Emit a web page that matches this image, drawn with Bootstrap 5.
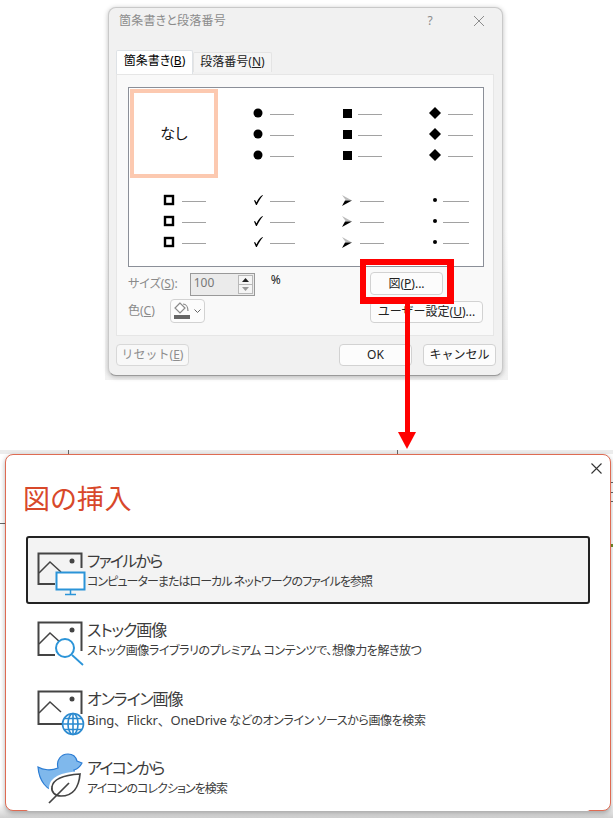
<!DOCTYPE html>
<html lang="ja">

<head>
    <meta charset="UTF-8">
    <meta name="viewport" content="width=device-width, initial-scale=1.0">
    <title>図の挿入</title>
    <link href="https://cdn.jsdelivr.net/npm/bootstrap@5.3.0/dist/css/bootstrap.min.css" rel="stylesheet">
    <style>
        body {
            background-color: #fff;
            font-family: "Noto Sans", "Noto Sans CJK JP", sans-serif;
            font-feature-settings: "palt";
            font-size: 12px;
            color: #222;
            overflow: hidden;
        }

        .page-wrap {
            width: 613px;
            height: 818px;
            position: relative;
        }

        /* upper screenshot */
        .shot-top {
            width: 403px;
            height: 380px;
            margin-left: 105px;
            padding: 7px 5px 4px 3px;
            background: linear-gradient(#fff 60%, #f2f2f2);
            position: relative;
        }

        .dlg {
            width: 395px;
            height: 369px;
            background-color: #f1f1f1;
            border: 1px solid #c9c9c9;
            border-bottom-color: #9a9a9a;
            border-radius: 8px;
            box-shadow: 0 1px 5px rgba(0, 0, 0, .25);
        }

        .dlg-title {
            height: 27px;
            padding: 0 17px 2px 10px;
            color: #8c8c8c;
            letter-spacing: .2px;
        }

        .title-btns {
            gap: 40px;
        }

        .dlg .nav-tabs {
            margin: 15px 8px 0 7px;
            border: 0;
            height: 24px;
            align-items: flex-start;
        }

        .dlg .nav-link {
            height: 24px;
            width: 77px;
            padding: 1px 0 0;
            text-align: center;
            font-size: 12px;
            color: #222;
            background-color: #fafafa;
            border: 1px solid #e4e4e4;
            border-bottom: 0;
            border-radius: 2px 2px 0 0;
        }

        .dlg .nav-item+.nav-item .nav-link {
            width: 79px;
            height: 20px;
            margin-top: 2px;
            padding-top: 0;
            background-color: #f4f4f4;
        }

        .tab-pane-box {
            height: 262px;
            margin: 0 8px 0 7px;
            padding: 12px 9px 0 11px;
            background-color: #f9f9f9;
            border: 1px solid #e6e6e6;
            position: relative;
        }

        .bullet-box {
            width: 356px;
            height: 180px;
            background-color: #fff;
            border: 1px solid #8b8f98;
            display: grid;
            grid-template-columns: 89px 89px 88px 88px;
            grid-template-rows: 90px 89px;
        }

        .bullet-none {
            border: 4px solid #fcc9b0;
            margin: 1px 0 0 1px;
            font-size: 15px;
            color: #111;
        }

        .bullet-cell {
            padding-top: 4px;
        }

        .bullet-cell.lower-cell {
            padding-top: 0;
            padding-bottom: 1px;
        }

        .bullet-line {
            height: 21px;
            padding-left: 34px;
        }

        .bullet-mark {
            width: 12px;
            height: 12px;
            margin-top: -3px;
        }

        .dash {
            height: 1px;
            width: 24px;
            margin-left: 6px;
            background-color: #a2a2a2;
        }

        .pane-label {
            color: #8a8a8a;
        }

        .opts-row {
            margin-top: 4px;
        }

        .size-row {
            height: 26px;
        }

        .colour-row {
            height: 26px;
            margin-top: 1px;
        }

        .spin-box {
            width: 65px;
            height: 23px;
            margin-left: 12px;
            padding-left: 3px;
            background-color: #ebebeb;
            border: 1px solid #999;
            color: #777;
            font-size: 12px;
        }

        .spin-btns {
            width: 15px;
            height: 19px;
            margin: 1px 1px 0 0;
            border: 1px solid #b8b8b8;
            background-color: #f5f5f5;
        }

        .spin-btns span {
            flex: 1;
            border-bottom: 1px solid #b8b8b8;
        }

        .dlg-btn {
            height: 22px;
            padding: 0;
            font-size: 12px;
            line-height: 20px;
            color: #222;
            background-color: #fcfcfc;
            border: 1px solid #d2d2d2;
            border-radius: 4px;
        }

        .dlg-btn:disabled {
            color: #8e8e8e;
            background-color: #f8f8f8;
            border-color: #d8d8d8;
            opacity: 1;
        }

        .btn-73 {
            width: 73px;
        }

        .btn-picture {
            height: 23px;
            margin-top: 1px;
        }

        .btn-user {
            width: 113px;
            margin-top: 6px;
        }

        .btn-colour {
            width: 35px;
            height: 24px;
            margin-left: 15px;
        }

        .left-opts {
            width: 242px;
        }

        .right-opts {
            width: 113px;
        }

        .dlg-foot {
            padding: 8px 6px 0 7px;
        }

        .foot-right {
            gap: 11px;
        }

        .red-box {
            position: absolute;
            left: 255px;
            top: 259px;
            width: 94px;
            height: 45px;
            border: 7px solid #f00;
            border-top-width: 6px;
            border-left-width: 6px;
            pointer-events: none;
        }

        .red-arrow {
            position: absolute;
            left: 396px;
            top: 304px;
        }

        /* lower screenshot */
        .shot-bottom {
            margin-top: 70px;
            height: 368px;
            padding: 4px 2px 0 5px;
            background: linear-gradient(#ececec 4px, #fff 4px, #fff 96%, #cfcfcf);
            position: relative;
        }

        .stray {
            position: absolute;
            background-color: #666;
        }

        .stray-green {
            background-color: #6e8f2c;
        }

        .insert-dlg {
            width: 606px;
            height: 357px;
            padding: 0 20px 0 20px;
            background-color: #fff;
            border: 1px solid #de6b53;
            border-radius: 8px;
            box-shadow: 0 2px 5px rgba(0, 0, 0, .3);
            position: relative;
        }

        .insert-close {
            position: absolute;
            top: 8px;
            right: 8px;
        }

        .insert-title {
            height: 81px;
            margin: 0 0 0 -3px;
            padding-top: 26px;
            font-size: 27px;
            line-height: 36px;
            font-weight: 400;
            color: #d8482a;
            letter-spacing: .5px;
        }

        .insert-list {
            gap: 1px;
            border-radius: 0;
        }

        .insert-item {
            height: 68px;
            padding: 8px 0 0 9px;
            background-color: #fff;
            border: 2px solid transparent !important;
            border-radius: 3px !important;
            margin: 0;
        }

        .insert-item.active-item {
            background-color: #f3f3f3;
            border-color: #222 !important;
        }

        .insert-item svg {
            flex: none;
            overflow: visible;
        }

        .item-head {
            display: block;
            margin-top: 4px;
            font-size: 16px;
            line-height: 23px;
            color: #3c3c3c;
            letter-spacing: -1.7px;
        }

        .item-sub {
            display: block;
            font-size: 12px;
            line-height: 18px;
            color: #3c3c3c;
            letter-spacing: -.95px;
        }

        .item-head.has-kanji {
            letter-spacing: -1.1px;
        }

        .item-sub.has-kanji {
            letter-spacing: -.4px;
        }

        .item-latin {
            font-size: 13px;
            letter-spacing: -.2px;
            font-feature-settings: normal;
        }
    </style>
</head>

<body>
    <div class="page-wrap">
        <div class="shot-top">
            <div class="dlg">
                <div class="dlg-title d-flex justify-content-between align-items-center">
                    <span>箇条書きと段落番号</span>
                    <span class="title-btns d-flex align-items-center">
                        <span>?</span>
                        <svg width="12" height="12" viewBox="0 0 12 12"><path d="M1 1l10 10M11 1L1 11" stroke="#8c8c8c" fill="none"/></svg>
                    </span>
                </div>
                <ul class="nav nav-tabs">
                    <li class="nav-item"><a class="nav-link active" href="#">箇条書き(<u>B</u>)</a></li>
                    <li class="nav-item"><a class="nav-link" href="#">段落番号(<u>N</u>)</a></li>
                </ul>
                <div class="tab-pane-box">
                    <div class="bullet-box" id="bullets">
                        <div class="bullet-none d-flex align-items-center justify-content-center">なし</div>
                    </div>
                    <div class="opts-row d-flex">
                        <div class="left-opts">
                            <div class="size-row d-flex align-items-center">
                                <span class="pane-label">サイズ(<u>S</u>):</span>
                                <div class="spin-box d-flex justify-content-between align-items-start">
                                    <span>100</span>
                                    <span class="spin-btns d-flex flex-column">
                                        <span class="d-flex align-items-center justify-content-center"><svg width="7" height="4"><path d="M0 4L3.5 0 7 4z" fill="#222"/></svg></span>
                                        <span class="d-flex align-items-center justify-content-center border-0"><svg width="7" height="4"><path d="M0 0L3.5 4 7 0z" fill="#999"/></svg></span>
                                    </span>
                                </div>
                                <span class="ms-3 mb-2">%</span>
                            </div>
                            <div class="colour-row d-flex align-items-center">
                                <span class="pane-label">色(<u>C</u>)</span>
                                <button class="btn dlg-btn btn-colour d-flex align-items-center justify-content-center gap-1" type="button">
                                    <svg width="17" height="18" viewBox="0 0 17 18"><path d="M7 1L2 6l5 5 5-5z" fill="#fff" stroke="#8a8a8a" stroke-width="1.2"/><path d="M10 2c3 0 5 3 5 7" fill="none" stroke="#8a8a8a" stroke-width="1.2"/><rect x="1" y="13" width="16" height="4" fill="#666"/></svg>
                                    <svg width="7" height="4" viewBox="0 0 7 4"><path d="M.5.5l3 3 3-3" fill="none" stroke="#666"/></svg>
                                </button>
                            </div>
                        </div>
                        <div class="right-opts d-flex flex-column">
                            <button class="btn dlg-btn btn-73 btn-picture" type="button">図(<u>P</u>)...</button>
                            <button class="btn dlg-btn btn-user" type="button">ユーザー設定(<u>U</u>)...</button>
                        </div>
                    </div>
                </div>
                <div class="dlg-foot d-flex justify-content-between">
                    <button class="btn dlg-btn btn-73" type="button" disabled>リセット(<u>E</u>)</button>
                    <div class="foot-right d-flex">
                        <button class="btn dlg-btn btn-73" type="button">OK</button>
                        <button class="btn dlg-btn btn-73" type="button">キャンセル</button>
                    </div>
                </div>
            </div>
            <div class="red-box"></div>
        </div>

        <svg class="red-arrow" width="22" height="146" viewBox="0 0 22 146">
            <rect x="9" y="0" width="5" height="130" fill="#f00"/>
            <path d="M2 128H20L11 145z" fill="#f00"/>
        </svg>

        <div class="shot-bottom">
            <span class="stray" style="left:68px;top:0;width:1px;height:4px"></span>
            <span class="stray" style="left:397px;top:0;width:1px;height:4px"></span>
            <span class="stray" style="left:0;top:73px;width:5px;height:1px"></span>
            <span class="stray" style="left:611px;top:32px;width:2px;height:1px"></span>
            <span class="stray" style="left:611px;top:42px;width:2px;height:1px"></span>
            <span class="stray" style="left:611px;top:51px;width:2px;height:1px"></span>
            <span class="stray stray-green" style="left:611px;top:94px;width:2px;height:3px"></span>

            <div class="insert-dlg">
                <svg class="insert-close" width="11" height="11" viewBox="0 0 11 11"><path d="M.5.5l10 10M10.5.5l-10 10" stroke="#333" fill="none" stroke-width="1.1"/></svg>
                <h1 class="insert-title">図の挿入</h1>
                <div class="list-group insert-list">
                    <div class="list-group-item insert-item active-item d-flex">
                        <svg width="50" height="54" viewBox="0 0 50 54">
                            <path d="M18 38H1.5V7.5h43V22" fill="none" stroke="#444" stroke-width="2"/>
                            <path d="M2 27l11-11 11 10" fill="none" stroke="#444" stroke-width="1.5"/>
                            <circle cx="35" cy="15" r="2.5" fill="#444"/>
                            <rect x="19.5" y="26.5" width="28" height="17" fill="#fff" stroke="#2b94d8" stroke-width="2"/>
                            <path d="M33.5 44v4M28 48.5h11" fill="none" stroke="#2b94d8" stroke-width="1.5"/>
                        </svg>
                        <div>
                            <span class="item-head">ファイルから</span>
                            <span class="item-sub">コンピューターまたはローカル ネットワークのファイルを参照</span>
                        </div>
                    </div>
                    <div class="list-group-item insert-item d-flex">
                        <svg width="50" height="54" viewBox="0 0 50 54">
                            <path d="M18 40H1.5V7.5h43V36" fill="none" stroke="#444" stroke-width="2"/>
                            <path d="M2 29l11-11 11 10" fill="none" stroke="#444" stroke-width="1.5"/>
                            <circle cx="35" cy="15" r="2.5" fill="#444"/>
                            <circle cx="28" cy="33" r="9" fill="#fff" stroke="#2b94d8" stroke-width="2"/>
                            <path d="M35 40l11 10" fill="none" stroke="#2b94d8" stroke-width="1.8"/>
                        </svg>
                        <div>
                            <span class="item-head has-kanji">ストック画像</span>
                            <span class="item-sub has-kanji">ストック画像ライブラリのプレミアム コンテンツで、想像力を解き放つ</span>
                        </div>
                    </div>
                    <div class="list-group-item insert-item d-flex">
                        <svg width="50" height="54" viewBox="0 0 50 54">
                            <path d="M25 40H1.5V7.5h43V30" fill="none" stroke="#444" stroke-width="2"/>
                            <path d="M2 29l11-11 11 10" fill="none" stroke="#444" stroke-width="1.5"/>
                            <circle cx="35" cy="15" r="2.5" fill="#444"/>
                            <g fill="#fff" stroke="#2b8ad0" stroke-width="1.6">
                                <circle cx="36" cy="40" r="10.5"/>
                                <ellipse cx="36" cy="40" rx="5" ry="10.5"/>
                                <path d="M36 29.5v21M25.5 40h21M27 34.5h18M27 45.5h18" fill="none"/>
                            </g>
                        </svg>
                        <div>
                            <span class="item-head has-kanji">オンライン画像</span>
                            <span class="item-sub has-kanji"><span class="item-latin">Bing、Flickr、OneDrive</span> などのオンライン ソースから画像を検索</span>
                        </div>
                    </div>
                    <div class="list-group-item insert-item d-flex">
                        <svg width="50" height="54" viewBox="0 0 50 54">
                            <path d="M1 14C6 17 14 18 21 15 19 7 24 1 31 1c5 0 8 3 9 7l5 2c-2 4-5 6-8 7 1 3-1 7-5 7L20 38C10 38 2 28 1 14z" fill="#7fb8ec" stroke="#2b7cd3" stroke-width="1.2"/>
                            <path d="M43 21C42 34 36 43 24 43c-6 0-10-4-9-9 1-8 13-12 28-13z" fill="#fff" stroke="#fff" stroke-width="6"/>
                            <path d="M43 21C42 34 36 43 24 43c-6 0-10-4-9-9 1-8 13-12 28-13z" fill="#fff" stroke="#444" stroke-width="1.7"/>
                            <path d="M12 50l20-20" fill="none" stroke="#444" stroke-width="1.7"/>
                        </svg>
                        <div>
                            <span class="item-head">アイコンから</span>
                            <span class="item-sub">アイコンのコレクションを検索</span>
                        </div>
                    </div>
                </div>
            </div>
        </div>
    </div>

    <script>
        // bullet marks, [svg, gap before the dash, dash width]
        const marks = {
            hollow: ['<rect x="2" y="2" width="8" height="8" fill="none" stroke="#000" stroke-width="2.4"/>', 7, 24],
            circle: ['<circle cx="6" cy="6" r="4.5"/>', 6, 24],
            square: ['<rect x="2" y="2" width="9" height="9"/>', 5, 24],
            diamond: ['<path d="M6 0l6 6-6 6-6-6z"/>', 7, 25],
            check: ['<path d="M2 6.500L3 6l1.500 2.500C6 5 8 2.500 10.500 1L11 1.300C8.500 4 6.500 8 4.800 11H4z"/>', 6, 25],
            arrow: ['<path d="M1 1l10 5.500H5z" fill="#bbb"/><path d="M11 6.500L1 12l3-5.500z"/>', 7, 24],
            dot: ['<circle cx="6" cy="6" r="2"/>', 2, 26]
        };
        const cells = ['circle', 'square', 'diamond', 'hollow', 'check', 'arrow', 'dot'];
        const box = document.getElementById('bullets');

        cells.forEach(function (name, idx) {
            const m = marks[name];
            let html = '';
            for (let i = 0; i < 3; i++) {
                html += '<div class="bullet-line d-flex align-items-center">' +
                    '<svg class="bullet-mark" viewBox="0 0 12 12">' + m[0] + '</svg>' +
                    '<span class="dash" style="margin-left:' + m[1] + 'px;width:' + m[2] + 'px"></span></div>';
            }
            const cell = document.createElement('div');
            cell.className = 'bullet-cell d-flex flex-column justify-content-center';
            if (idx > 2) cell.classList.add('lower-cell');
            cell.innerHTML = html;
            box.appendChild(cell);
        });
    </script>
    <script src="https://cdn.jsdelivr.net/npm/bootstrap@5.3.0/dist/js/bootstrap.bundle.min.js"></script>
</body>

</html>
